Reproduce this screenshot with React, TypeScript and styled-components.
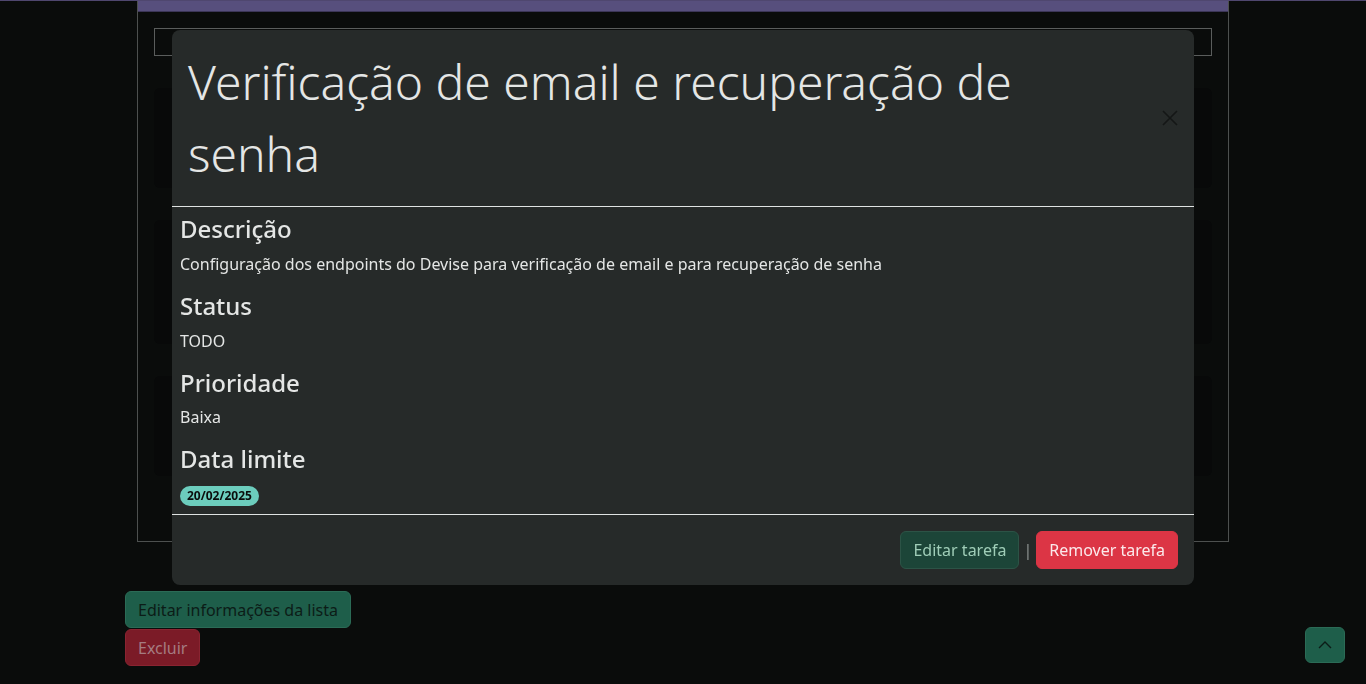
import React from "react";
import styled, { createGlobalStyle } from "styled-components";

const Global = createGlobalStyle`
  html, body { margin: 0; padding: 0; background: #0a0c0b; }
  body { font-family: "Noto Sans", "Open Sans", sans-serif; color: #dee2e6; overflow: hidden; }
  * { box-sizing: border-box; }
`;

const Page = styled.div`
  min-height: 684px;
  border-top: 1px solid #4f476f;
`;

const Container = styled.div`
  width: 1140px;
  margin: 0 auto;
  padding: 0 12px;
`;

const ListBox = styled.section`
  margin: 0 12px;
  height: 541px;
  border: 1px solid #4d504f;
  border-top: none;
  display: flex;
  flex-direction: column;
`;

const ListHeader = styled.div`
  height: 11px;
  background: #574f7d;
  border-bottom: 1px solid #3c3657;
`;

const ListBody = styled.div`
  padding: 16px 16px 0 16px;
  display: flex;
  flex-direction: column;
  gap: 32px;
`;

const Toolbar = styled.div`
  height: 28px;
  border: 1px solid #5a5d5c;
`;

const GhostCard = styled.div<{ $h: number }>`
  height: ${(p) => p.$h}px;
  background: #080909;
  border-radius: 6px;
`;

const Actions = styled.div`
  display: flex;
  flex-direction: column;
  align-items: flex-start;
  gap: 1px;
  margin-top: 49px;
`;

const BgButton = styled.button<{ $variant: "green" | "red" }>`
  font-family: "Noto Sans", sans-serif;
  font-size: 16px;
  line-height: 24px;
  padding: 6px 12px 5px;
  border-radius: 6px;
  border: 1px solid ${(p) => (p.$variant === "green" ? "#2b6b56" : "#8a2431")};
  background: ${(p) => (p.$variant === "green" ? "#1e5e4a" : "#7b1b27")};
  color: ${(p) => (p.$variant === "green" ? "#0c1c17" : "#a57b81")};
`;

const Overlay = styled.div`
  position: fixed;
  inset: 0;
  display: flex;
  justify-content: center;
  align-items: flex-start;
  padding-top: 30px;
`;

const Modal = styled.div`
  width: 1022px;
  background: #262a29;
  border-radius: 8px;
  display: flex;
  flex-direction: column;
`;

const ModalHeader = styled.header`
  display: flex;
  align-items: center;
  justify-content: space-between;
  padding: 16px;
  border-bottom: 1px solid #dfe3e2;
`;

const Title = styled.h1`
  max-width: 900px;
  margin: 0;
  font-family: "Noto Sans", sans-serif;
  font-weight: 300;
  font-size: 48px;
  line-height: 72px;
  color: #e4e6e5;
`;

const CloseButton = styled.button`
  width: 24px;
  height: 24px;
  border: none;
  background: transparent;
  padding: 0;
  display: flex;
  align-items: center;
  justify-content: center;
  margin-right: -4px;
`;

const ModalBody = styled.div`
  padding: 8px;
`;

const FieldTitle = styled.h4`
  margin: 0 0 8px 0;
  font-family: "Noto Sans", sans-serif;
  font-weight: 500;
  font-size: 24px;
  line-height: 28.8px;
  color: #e4e6e5;
`;

const FieldText = styled.p<{ $last?: boolean }>`
  margin: 0 0 ${(p) => (p.$last ? 0 : 16)}px 0;
  font-size: 16px;
  line-height: 24px;
  color: #e4e6e5;
  display: flex;
  align-items: center;
  height: 24px;
`;

const Badge = styled.span`
  display: inline-flex;
  align-items: center;
  height: 20px;
  background: #6ccdbd;
  color: #0a0c0b;
  font-weight: 700;
  font-size: 12px;
  line-height: 12px;
  padding: 0 7px;
  border-radius: 10px;
  margin-top: 3px;
`;

const ModalFooter = styled.footer`
  display: flex;
  justify-content: flex-end;
  align-items: center;
  gap: 4px;
  padding: 16px;
  border-top: 1px solid #dfe3e2;
`;

const FooterButton = styled.button<{ $variant: "green" | "red" }>`
  font-family: "Noto Sans", sans-serif;
  font-size: 16px;
  line-height: 24px;
  padding: 6px 12px;
  border-radius: 6px;
  border: 1px solid ${(p) => (p.$variant === "green" ? "#2c5346" : "#dc3545")};
  background: ${(p) => (p.$variant === "green" ? "#1c4538" : "#dc3545")};
  color: ${(p) => (p.$variant === "green" ? "#9fcdb7" : "#fbe9eb")};
`;

const Separator = styled.span`
  color: #8e9391;
  font-size: 16px;
`;

const ScrollTop = styled.button`
  position: fixed;
  right: 21px;
  bottom: 21px;
  width: 40px;
  height: 36px;
  border-radius: 6px;
  border: 1px solid #2b6b56;
  background: #1e5e4a;
  display: flex;
  align-items: center;
  justify-content: center;
  padding: 0;
`;

export default function App() {
  return (
    <>
      <Global />
      <Page>
        <Container>
          <ListBox>
            <ListHeader />
            <ListBody>
              <Toolbar />
              <GhostCard $h={100} />
              <GhostCard $h={124} />
              <GhostCard $h={100} />
            </ListBody>
          </ListBox>
          <Actions>
            <BgButton $variant="green">Editar informações da lista</BgButton>
            <BgButton $variant="red">Excluir</BgButton>
          </Actions>
        </Container>
      </Page>
      <Overlay>
        <Modal>
          <ModalHeader>
            <Title>Verificação de email e recuperação de senha</Title>
            <CloseButton aria-label="Fechar">
              <svg width="16" height="16" viewBox="0 0 16 16">
                <path d="M1 1 L15 15 M15 1 L1 15" stroke="#141716" strokeWidth="1.6" fill="none" />
              </svg>
            </CloseButton>
          </ModalHeader>
          <ModalBody>
            <FieldTitle>Descrição</FieldTitle>
            <FieldText>
              Configuração dos endpoints do Devise para verificação de email e para recuperação de senha
            </FieldText>
            <FieldTitle>Status</FieldTitle>
            <FieldText>TODO</FieldText>
            <FieldTitle>Prioridade</FieldTitle>
            <FieldText>Baixa</FieldText>
            <FieldTitle>Data limite</FieldTitle>
            <FieldText $last>
              <Badge>20/02/2025</Badge>
            </FieldText>
          </ModalBody>
          <ModalFooter>
            <FooterButton $variant="green">Editar tarefa</FooterButton>
            <Separator>|</Separator>
            <FooterButton $variant="red">Remover tarefa</FooterButton>
          </ModalFooter>
        </Modal>
      </Overlay>
      <ScrollTop aria-label="Voltar ao topo">
        <svg width="16" height="16" viewBox="0 0 16 16">
          <path d="M2 11 L8 5 L14 11" stroke="#0c1c17" strokeWidth="1.4" fill="none" />
        </svg>
      </ScrollTop>
    </>
  );
}
